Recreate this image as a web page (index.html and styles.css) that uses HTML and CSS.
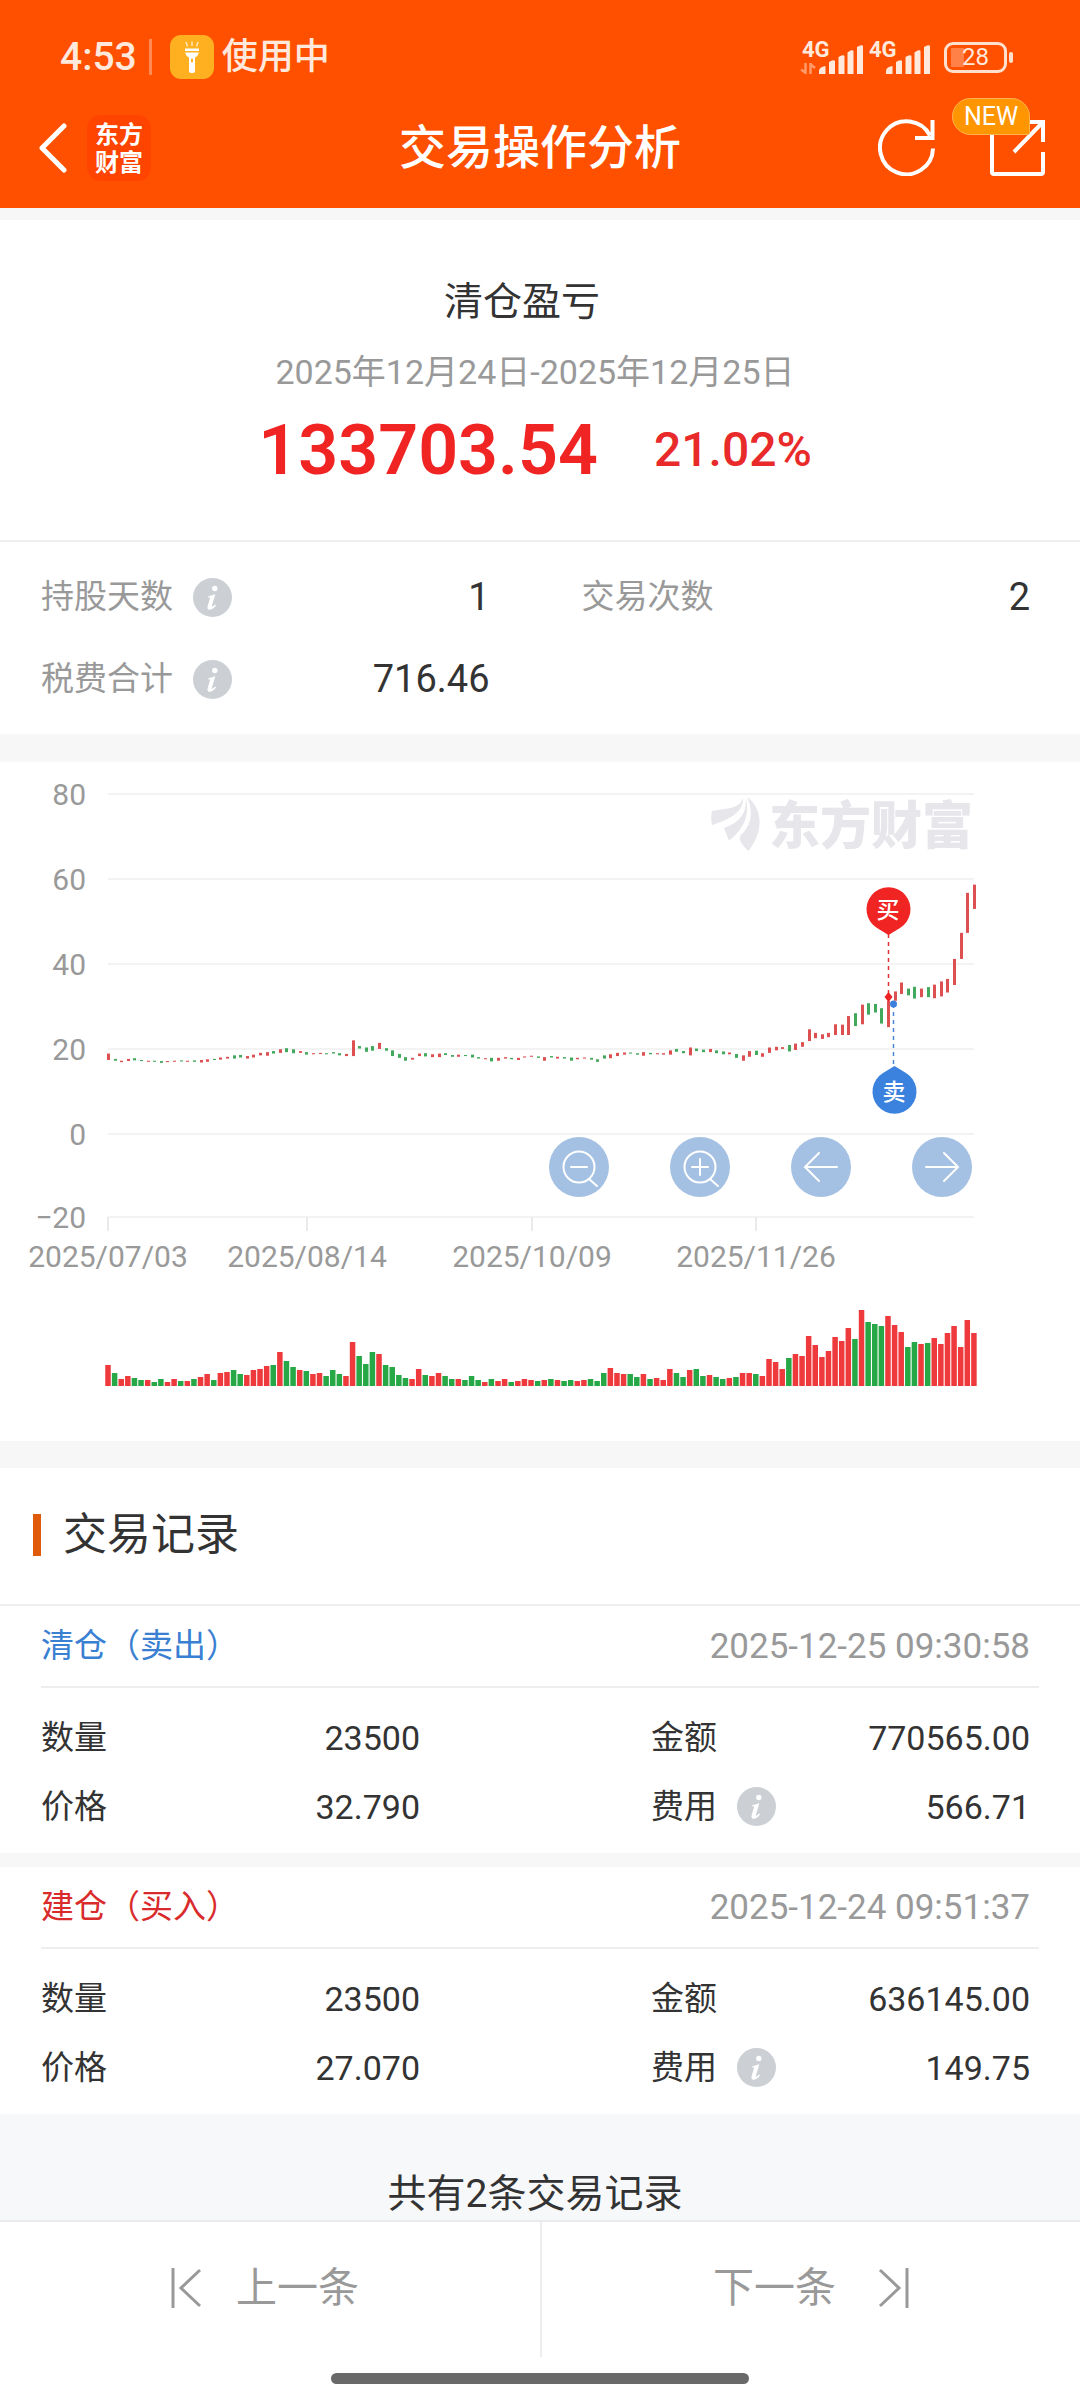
FILE: index.html
```html
<!DOCTYPE html>
<html lang="zh-CN">
  <head>
    <meta charset="utf-8">
    <meta name="viewport" content="width=device-width, initial-scale=1">
    <title>交易操作分析</title>
    <link rel="stylesheet" href="styles.css">
  </head>
  <body>
    <svg class="defs" width="0" height="0" aria-hidden="true">
      <symbol id="info" viewBox="0 0 39 39">
        <circle cx="19.5" cy="19.5" r="19.5" fill="#ccd0d5"/>
        <circle cx="21.8" cy="10.5" r="2.7" fill="#fff"/>
        <path d="M15 18.500L22.300 16.200 18.800 28Q18.600 30 22.300 26.600L23 27.400Q19 32.200 16 31.700 13.800 31.200 14.700 28L17 20.300Q17.300 18.900 15.200 19.400z" fill="#fff"/>
      </symbol>
      <symbol id="bars" viewBox="0 0 44 29">
        <path d="M0 29v-3q0-4 6.500-5v8zM10 29V17l3-1.500q3-1 3 1V29zM19.500 29V12l3-1.500q3-1 3 1V29zM28.500 29V7.500l3-2q3-1 3 1V29zM38 29V2l3-1.500q3-1 3 1V29z" fill="#ffe9dc"/>
      </symbol>
    </svg>

    <header class="top">
      <div class="status">
        <span class="clock">4:53</span>
        <span class="split"></span>
        <svg class="torch" viewBox="0 0 44 44">
          <rect width="44" height="44" rx="11" fill="#ffb020"/>
          <path d="M16 7l1.500 4.500M22 6.500v4.500M28 7l-1.500 4.500" stroke="#ffe3ae" stroke-width="1.600"/>
          <path d="M15 13.500h14v2.500H15zM15 17.500h14q-1 3.500-4 5V36q0 2-2 2h-2q-2 0-2-2V22.500q-3-1.500-4-5z" fill="#fff"/>
          <rect x="21" y="23.500" width="2" height="4" rx="1" fill="#ffb020"/>
        </svg>
        <span class="using">使用中</span>
        <span class="signals">
          <span class="signal">
            <b>4G</b>
            <svg class="updown" viewBox="0 0 16 11"><path d="M5.500 0v11M6 10L1 6.500M10.500 11V0M10 1l5 4" stroke="#ff9a6b" stroke-width="2.500"/></svg>
            <svg class="bars"><use href="#bars"/></svg>
          </span>
          <span class="signal">
            <b>4G</b>
            <svg class="bars"><use href="#bars"/></svg>
          </span>
          <span class="battery"><span>28</span></span>
        </span>
      </div>
      <nav class="nav">
        <div class="nav_left">
          <button class="icon_button" aria-label="返回">
            <svg width="32" height="50" viewBox="-4 0 32 50"><path d="M25 3L3 25l22 22" fill="none" stroke="#fff" stroke-width="5" stroke-linecap="round" stroke-linejoin="round"/></svg>
          </button>
          <span class="brand">东方<br>财富</span>
        </div>
        <h1>交易操作分析</h1>
        <div class="nav_right">
          <button class="icon_button" aria-label="刷新">
            <svg width="57" height="57" viewBox="0 0 57 57"><path d="M55 29.500A26.500 26.500 0 1 1 52 16.500M54.500 1v18H37" fill="none" stroke="#fff" stroke-width="4"/></svg>
          </button>
          <button class="icon_button share" aria-label="分享">
            <svg width="55" height="56" viewBox="0 0 55 56"><path d="M38 2h15v20M52 3L24 32M53 32v20q0 2-2 2H4q-2 0-2-2V10" fill="none" stroke="#fff" stroke-width="4"/></svg>
            <span class="badge">NEW</span>
          </button>
        </div>
      </nav>
    </header>

    <main>
      <section class="summary">
        <h2>清仓盈亏</h2>
        <p class="period">2025年12月24日-2025年12月25日</p>
        <p class="profit"><strong>133703.54</strong><span>21.02%</span></p>
      </section>

      <section class="stats">
        <div class="pair"><span>持股天数</span><button class="info" aria-label="持股天数说明"><svg><use href="#info"/></svg></button><b>1</b></div>
        <div class="pair"><span>交易次数</span><b>2</b></div>
        <div class="pair"><span>税费合计</span><button class="info" aria-label="税费合计说明"><svg><use href="#info"/></svg></button><b>716.46</b></div>
      </section>

      <section class="chart">
        <svg id="chart" viewBox="0 0 1080 679">
          <g id="grid"></g>
          <g class="watermark">
            <path d="M712 49C728 46 740 47 743 35.500C744 48 734 56 712 63C711 58 711 53 712 49zM745.500 35C751 54 742 69 729 78.500L724 66C738 61 748 52 745.500 35zM747.500 35C764 49 763 70 748.500 89C741 82 739 78 740 74C751 64 754 52 747.500 35z"/>
            <text x="769" y="82">东方财富</text>
          </g>
          <g id="candles"></g>
          <g id="volume"></g>
          <path d="M888.500 172v63" stroke="#dd3434" stroke-width="1.500" stroke-dasharray="4 4"/>
          <path d="M893.500 242v63" stroke="#4a88d8" stroke-width="1.500" stroke-dasharray="4 4"/>
          <path d="M888.500 230l4 5-4 5-4-5z" fill="#ee2222"/>
          <circle cx="893.500" cy="242" r="3.500" fill="#3a80dc"/>
          <path d="M888.500 173L877 166A22 22 0 1 1 900 166z" fill="#f12424"/>
          <path d="M894.500 304L906 311A22 22 0 1 1 883 311z" fill="#3b82de"/>
          <text class="pin" x="888" y="156">买</text>
          <text class="pin" x="894" y="338">卖</text>
        </svg>
        <div class="tools">
          <button aria-label="缩小"><svg viewBox="0 0 60 60"><circle cx="30" cy="30" r="15.500"/><path d="M22 30h16M40 42l8 7"/></svg></button>
          <button aria-label="放大"><svg viewBox="0 0 60 60"><circle cx="30" cy="30" r="15.500"/><path d="M22 30h16M30 22v16M40 42l8 7"/></svg></button>
          <button aria-label="左移"><svg viewBox="0 0 60 60"><path d="M46 30H14M28 16L14 30l14 14"/></svg></button>
          <button aria-label="右移"><svg viewBox="0 0 60 60"><path d="M14 30h32M32 16l14 14-14 14"/></svg></button>
        </div>
      </section>

      <section class="records">
        <h2>交易记录</h2>
        <article>
          <header><h3 class="sell">清仓（卖出）</h3><time>2025-12-25 09:30:58</time></header>
          <div class="details">
            <div class="pair"><span>数量</span><b>23500</b></div>
            <div class="pair"><span>金额</span><b>770565.00</b></div>
            <div class="pair"><span>价格</span><b>32.790</b></div>
            <div class="pair"><span>费用</span><button class="info" aria-label="费用说明"><svg><use href="#info"/></svg></button><b>566.71</b></div>
          </div>
        </article>
        <article>
          <header><h3 class="buy">建仓（买入）</h3><time>2025-12-24 09:51:37</time></header>
          <div class="details">
            <div class="pair"><span>数量</span><b>23500</b></div>
            <div class="pair"><span>金额</span><b>636145.00</b></div>
            <div class="pair"><span>价格</span><b>27.070</b></div>
            <div class="pair"><span>费用</span><button class="info" aria-label="费用说明"><svg><use href="#info"/></svg></button><b>149.75</b></div>
          </div>
        </article>
      </section>
      <p class="total">共有2条交易记录</p>
    </main>

    <footer>
      <div class="pager">
        <button>
          <svg width="31" height="40" viewBox="0 0 31 40"><path d="M2 0v40M29 2L10 20l19 18"/></svg>
          上一条
        </button>
        <button>
          下一条
          <svg width="31" height="40" viewBox="0 0 31 40"><path d="M29 0v40M2 2l19 18L2 38"/></svg>
        </button>
      </div>
      <div class="home"></div>
    </footer>

    <script src="chart.js"></script>
  </body>
</html>
```
FILE: styles.css
```css
*
{
  box-sizing: border-box;
}
body
{
  margin: 0;
  background: #f7f7f7;
  color: #333;
  font-family: Roboto, "Noto Sans CJK SC", sans-serif;
  font-size: 33px;
}
h1, h2, h3, p
{
  margin: 0;
  font-weight: 400;
}
b
{
  font-weight: 400;
}
button
{
  border: 0;
  padding: 0;
  background: none;
  color: inherit;
  font: inherit;
}
svg
{
  display: block;
}
.defs
{
  position: absolute;
}

/* header */
.top
{
  height: 208px;
  padding-top: 35px;
  background: #ff5000;
  color: #fff;
}
.status
{
  display: flex;
  align-items: center;
  height: 44px;
  padding: 0 73px 0 60px;
  color: #ffe9dc;
}
.clock
{
  font-size: 39px;
  font-weight: 500;
}
.split
{
  width: 3px;
  height: 36px;
  margin: 0 18px 0 12px;
  background: #ff8a55;
}
.torch
{
  width: 44px;
  height: 44px;
}
.using
{
  margin-left: 8px;
  font-size: 36px;
  font-weight: 500;
  line-height: 44px;
}
.signals
{
  display: flex;
  align-items: center;
  gap: 6px;
  margin-left: auto;
}
.signal
{
  position: relative;
  width: 61px;
  height: 34px;
}
.signal b
{
  display: block;
  font-size: 22px;
  font-weight: 700;
  line-height: 20px;
}
.bars
{
  position: absolute;
  right: 0;
  bottom: 0;
  width: 44px;
  height: 29px;
}
.updown
{
  position: absolute;
  left: -2px;
  bottom: 0;
  width: 16px;
  height: 11px;
}
.battery
{
  position: relative;
  width: 63px;
  height: 31px;
  margin-left: 8px;
  border: 3px solid #ffe0cf;
  border-radius: 9px;
  background: linear-gradient(#ff8148, #ff8148) 4px center / 13px 19px no-repeat;
  font-size: 24px;
  line-height: 25px;
  text-align: center;
}
.battery:after
{
  content: "";
  position: absolute;
  right: -9px;
  top: 7px;
  width: 4px;
  height: 11px;
  border-radius: 2px;
  background: #ffe0cf;
}
.nav
{
  display: grid;
  grid-template-columns: 1fr auto 1fr;
  align-items: center;
  height: 129px;
  padding: 8px 35px 0;
}
.nav h1
{
  font-size: 47px;
  font-weight: 500;
  line-height: 64px;
}
.nav_left, .nav_right
{
  display: flex;
  align-items: center;
}
.nav_left
{
  gap: 20px;
}
.nav_right
{
  justify-content: flex-end;
  gap: 55px;
}
.brand
{
  width: 64px;
  height: 66px;
  padding-top: 4px;
  border-radius: 14px;
  background: #ff4400;
  font-family: "Noto Sans CJK SC", sans-serif;
  font-size: 24px;
  font-weight: 700;
  line-height: 28px;
  text-align: center;
}
.share
{
  position: relative;
}
.badge
{
  position: absolute;
  left: -38px;
  top: -22px;
  width: 78px;
  height: 37px;
  border: 1px solid #ffb450;
  border-radius: 19px 19px 2px 19px;
  background: #ff9500;
  font-size: 25px;
  line-height: 36px;
  text-align: center;
}

/* profit and totals */
main > section
{
  background: #fff;
}
.summary
{
  height: 322px;
  margin-top: 12px;
  padding: 53px 10px 0 0;
  border-bottom: 2px solid #eee;
  text-align: center;
}
.summary h2
{
  padding-right: 26px;
  font-size: 39px;
  line-height: 58px;
}
.period
{
  margin-top: 16px;
  color: #999;
  font-size: 34px;
  line-height: 50px;
}
.profit
{
  display: flex;
  justify-content: center;
  align-items: center;
  gap: 56px;
  margin-top: 11px;
  color: #e92a2a;
  font-size: 48px;
  font-weight: 500;
  line-height: 84px;
}
.profit strong
{
  color: #f12424;
  font-size: 70px;
  font-weight: 600;
}
.stats
{
  display: grid;
  grid-template-columns: 1fr 1fr;
  grid-auto-rows: 82px;
  column-gap: 92px;
  padding: 14px 50px 14px 41px;
}
.pair
{
  display: flex;
  align-items: center;
  line-height: 48px;
}
.pair b
{
  margin-left: auto;
}
.stats span
{
  color: #999;
}
.stats b
{
  font-size: 38px;
}
.info
{
  margin-left: 20px;
}
.info svg
{
  width: 39px;
  height: 39px;
}

/* chart */
.chart
{
  position: relative;
  margin-top: 28px;
}
.chart text
{
  fill: #999;
  font-size: 30px;
}
.chart .watermark text
{
  font-family: "Noto Sans CJK SC", sans-serif;
  font-size: 51px;
  font-weight: 900;
}
.chart .watermark, .chart .watermark text
{
  fill: #e6e6eb;
}
.chart .pin
{
  fill: #fff;
  font-size: 23px;
  font-weight: 500;
  text-anchor: middle;
}
.tools
{
  position: absolute;
  right: 10%;
  top: 375px;
  display: flex;
  gap: 61px;
}
.tools button
{
  width: 60px;
  height: 60px;
  border-radius: 50%;
  background: #a4c1e3;
}
.tools svg
{
  fill: none;
  stroke: #fff;
  stroke-width: 2;
  stroke-linecap: round;
}

/* records */
.records
{
  margin-top: 27px;
}
.records h2
{
  display: flex;
  align-items: center;
  gap: 22px;
  height: 138px;
  padding: 0 0 2px 33px;
  border-bottom: 2px solid #eee;
  font-size: 44px;
  line-height: 60px;
}
.records h2:before
{
  content: "";
  width: 8px;
  height: 42px;
  background: #e05a0c;
}
article + article
{
  border-top: 14px solid #f7f7f7;
}
article header
{
  display: flex;
  justify-content: space-between;
  align-items: center;
  height: 82px;
  margin: 0 41px;
  padding-right: 9px;
  border-bottom: 2px solid #eee;
}
article h3
{
  font-size: 33px;
  line-height: 48px;
}
.sell
{
  color: #3a80d2;
}
.buy
{
  color: #d92b2b;
}
time
{
  color: #999;
  font-size: 35px;
}
.details
{
  display: grid;
  grid-template-columns: 1fr 1fr;
  grid-auto-rows: 69px;
  column-gap: 231px;
  padding: 15px 50px 12px 41px;
}
.details b
{
  font-size: 34px;
}
.total
{
  height: 106px;
  padding: 50px 10px 0 0;
  background: #f7f8fa;
  font-size: 39px;
  line-height: 60px;
  text-align: center;
}

/* bottom bar */
footer
{
  padding-bottom: 16px;
  border-top: 2px solid #eaeaec;
  background: #fff;
  color: #999;
}
.pager
{
  display: grid;
  grid-template-columns: 1fr 1fr;
  height: 135px;
}
.pager button
{
  display: flex;
  justify-content: center;
  align-items: center;
  gap: 34px;
  padding: 0 10px 4px 0;
  font-size: 41px;
  line-height: 56px;
}
.pager button + button
{
  gap: 42px;
  padding-right: 0;
  border-left: 2px solid #eee;
}
.pager svg
{
  fill: none;
  stroke: #999;
  stroke-width: 3;
}
.home
{
  width: 40%;
  max-width: 418px;
  height: 11px;
  margin: 16px auto 0;
  border-radius: 6px;
  background: #696969;
}
```
FILE: chart.js
```js
// one letter per trading day: r = up, g = down
var colors =
  "rgrrggrggrrgrgrrgrrggrrrrgrggrgrrgggrrgggrggggrrgrrggrggg" +
  "rgrrgrrrgrgrggrrgggrrrggrgrrrggrggrggrgrrgrrrrgrrrrrrrrrgrgggrrrggrgrrrrrrr";

var volume = [
  21,13,7,10,8,6,6,4,7,4,7,5,5,7,9,12,6,13,14,16,12,11,16,17,20,21,34,25,19,16,
  15,12,13,10,16,12,10,44,30,22,34,32,21,19,11,8,7,17,11,10,13,10,7,7,6,10,6,4,
  7,5,7,4,5,7,6,5,6,7,6,5,6,5,6,7,5,13,18,13,12,12,9,12,7,8,6,17,13,9,16,17,10,
  11,9,7,8,9,13,13,12,10,27,24,17,28,32,30,50,41,29,35,49,45,58,47,76,64,62,60,
  70,61,54,39,44,42,43,48,42,53,60,39,66,53
];

// top and bottom of each candle, in 1/2.8 px
var candles = [
  [850,868],[865,870],[870,874],[865,871],[863,869],[868,871],[870,873],[870,873],
  [871,876],[871,874],[870,873],[869,872],[870,873],[869,873],[868,875],[866,873],
  [865,868],[861,867],[859,864],[855,864],[854,861],[857,864],[853,861],[848,855],
  [846,856],[843,850],[838,848],[835,846],[838,849],[843,848],[846,853],[849,852],
  [848,851],[849,852],[846,850],[849,855],[851,857],[813,857],[829,836],[833,845],
  [829,842],[820,837],[835,842],[841,857],[851,862],[860,870],[862,867],[850,857],
  [849,858],[852,860],[850,860],[849,854],[854,859],[853,859],[854,857],[853,861],
  [860,864],[863,866],[862,872],[862,870],[860,864],[862,866],[862,868],[858,861],
  [856,859],[858,862],[860,870],[857,861],[859,864],[860,864],[861,870],[862,866],
  [861,864],[862,867],[866,873],[855,864],[852,863],[848,857],[847,853],[847,850],
  [849,853],[846,856],[848,852],[849,852],[849,853],[841,853],[837,845],[843,849],
  [833,855],[836,843],[839,846],[837,846],[841,849],[844,852],[847,852],[851,862],
  [855,870],[843,859],[842,854],[849,859],[833,848],[831,841],[832,837],[826,844],
  [822,840],[818,831],[782,815],[792,807],[796,809],[792,804],[768,798],[769,798],
  [745,798],[737,773],[713,768],[709,741],[711,735],[723,766],[703,776],[676,702],
  [651,683],[668,687],[663,696],[668,692],[664,692],[657,695],[648,690],[641,679],
  [585,658],[512,585],[400,512],[377,445]
];

var left = 108;
var step = 6.61;
var baseline = 624;

function add(parent, tag, attrs, text)
{
  let el = document.createElementNS("http://www.w3.org/2000/svg", tag);
  for(let name in attrs)
    el.setAttribute(name, attrs[name]);
  if(text !== undefined)
    el.textContent = text;
  document.getElementById(parent).appendChild(el);
}

function drawGrid()
{
  let lines = {"80": 32, "60": 117, "40": 202, "20": 287, "0": 372, "-20": 455};
  for(let label in lines)
  {
    let y = lines[label];
    add("grid", "rect", {x: left, y: y - 1, width: 866, height: 2, fill: "#f3f3f3"});
    add("grid", "text", {x: 86, y: y + 11, "text-anchor": "end"}, label.replace("-", "−"));
  }

  let dates = {"2025/07/03": 108, "2025/08/14": 307, "2025/10/09": 532, "2025/11/26": 756};
  for(let date in dates)
  {
    add("grid", "rect", {x: dates[date] - 1, y: 455, width: 2, height: 14, fill: "#eaeaea"});
    add("grid", "text", {x: dates[date], y: 505, "text-anchor": "middle"}, date);
  }
}

function drawDays()
{
  for(let i = 0; i < volume.length; i++)
  {
    let x = left + i * step;
    let up = colors[i] == "r";
    let y = candles[i][0] / 2.8 - 12;
    add("candles", "rect", {
      x: Math.round(x - 1), y: y, width: 3,
      height: (candles[i][1] - candles[i][0]) / 2.8,
      fill: up ? "#dc5052" : "#42a85c"
    });
    add("volume", "rect", {
      x: x - 2.75, y: baseline - volume[i], width: 5.5,
      height: volume[i],
      fill: up ? "#ee3a3c" : "#25a845"
    });
  }
}

drawGrid();
drawDays();
```
